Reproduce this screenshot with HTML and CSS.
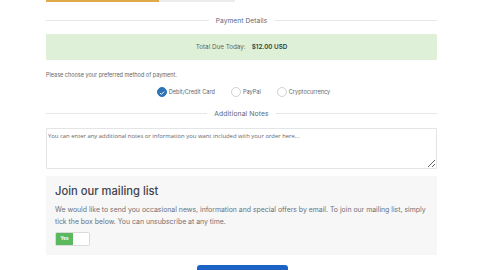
FILE: index.html
```html
<!DOCTYPE html>
<html>
<head>
<meta charset="utf-8">
<link rel="stylesheet" href="styles.css">
</head>
<body>
<div class="wrap">
  <div class="topbar"><div class="topbar-fill"></div><div class="topbar-rest"></div></div>
  <div class="divider divider-first"><span class="line"></span><span class="divider-text">Payment Details</span><span class="line"></span></div>
  <div class="total">
    <span class="total-label">Total Due Today:</span>
    <span class="total-amount">$12.00 USD</span>
  </div>
  <p class="choose">Please choose your preferred method of payment.</p>
  <div class="methods">
    <label class="method"><span class="radio checked"><svg viewBox="0 0 10 10" width="10" height="10"><path d="M2.7 5.2 L4.3 6.7 L7.3 3.6" fill="none" stroke="#fff" stroke-width="1.2" stroke-linecap="round" stroke-linejoin="round"/></svg></span>Debit/Credit Card</label>
    <label class="method"><span class="radio"></span>PayPal</label>
    <label class="method"><span class="radio"></span>Cryptocurrency</label>
  </div>
  <div class="divider divider-notes"><span class="line"></span><span class="divider-text">Additional Notes</span><span class="line"></span></div>
  <textarea class="notes" placeholder="You can enter any additional notes or information you want included with your order here..."></textarea>
  <div class="mailing">
    <h2 class="mailing-title">Join our mailing list</h2>
    <p class="mailing-text">We would like to send you occasional news, information and special offers by email. To join our mailing list, simply tick the box below. You can unsubscribe at any time.</p>
    <div class="toggle"><span class="toggle-yes">Yes</span><span class="toggle-off"></span></div>
  </div>
  <div class="actions"><button class="submit"></button></div>
</div>
</body>
</html>
```
FILE: styles.css
```css
html, body {
  margin: 0;
  padding: 0;
  background: #ffffff;
}
body {
  font-family: "Inter", "Noto Sans", sans-serif;
  color: #333;
  overflow: hidden;
  height: 270px;
}
.wrap {
  margin-left: 46px;
  width: 391px;
}
.topbar {
  display: flex;
  height: 1.5px;
}
.topbar-fill {
  width: 113px;
  background: #e0a94a;
}
.topbar-rest {
  width: 76px;
  background: #ececec;
}
.divider {
  display: flex;
  align-items: center;
}
.divider-first {
  margin-top: 13px;
  height: 12px;
}
.line {
  flex: 1;
  height: 1px;
  background: #e6e7ea;
}
.divider-text {
  padding: 0 7px;
  font-size: 6.6px;
  color: #5b6677;
  letter-spacing: 0.1px;
}
.total {
  margin-top: 7px;
  height: 26px;
  background: #dff0d8;
  display: flex;
  align-items: center;
  justify-content: center;
  gap: 6px;
  font-size: 6.3px;
  border-radius: 1px;
}
.total-label {
  color: #5d6660;
}
.total-amount {
  color: #333d35;
  font-weight: 600;
}
.choose {
  margin: 11px 0 0;
  font-size: 5.5px;
  color: #666;
  line-height: 8px;
}
.methods {
  margin-top: 8px;
  display: flex;
  justify-content: center;
  gap: 16px;
  padding-left: 4px;
}
.method {
  display: flex;
  align-items: center;
  gap: 2px;
  font-size: 5.6px;
  color: #666;
}
.radio {
  width: 10px;
  height: 10px;
  border-radius: 50%;
  border: 0.7px solid #cfd2d6;
  box-sizing: border-box;
  display: flex;
  background: #fff;
}
.radio.checked {
  background: #2d74b4;
  border-color: #2d74b4;
}
.divider-notes {
  margin-top: 11px;
  height: 12px;
}
.divider-notes .divider-text {
  font-size: 6.8px;
}
.notes {
  display: block;
  margin-top: 8px;
  width: 391px;
  height: 41px;
  box-sizing: border-box;
  border: 1px solid #e3e4e6;
  border-radius: 1px;
  padding: 3px 1px;
  font-family: "Open Sans", sans-serif;
  font-size: 5.9px;
  resize: vertical;
}
.notes::placeholder {
  color: #666;
}
.mailing {
  margin-top: 7px;
  background: #f7f7f8;
  padding: 8px 9px 7px;
  height: 79px;
  box-sizing: border-box;
}
.mailing-title {
  margin: 0;
  font-size: 11.2px;
  font-weight: 500;
  color: #3e434c;
  line-height: 14px;
}
.mailing-text {
  margin: 6px 0 0;
  font-size: 6.9px;
  line-height: 12px;
  color: #6e7177;
}
.toggle {
  margin-top: 4px;
  display: flex;
  width: 35px;
  height: 14px;
  border: 0.7px solid #d9dadc;
  border-radius: 1.5px;
  overflow: hidden;
  box-sizing: border-box;
}
.toggle-yes {
  width: 17px;
  background: #5cb85c;
  color: #fff;
  font-size: 4.5px;
  font-weight: 700;
  display: flex;
  align-items: center;
  justify-content: center;
}
.toggle-off {
  flex: 1;
  background: #fff;
}
.actions {
  margin-top: 10px;
  display: flex;
  justify-content: center;
}
.submit {
  width: 91px;
  height: 20px;
  margin-left: 2px;
  background: #1d63c6;
  border: 0;
  border-radius: 3px;
}
```
